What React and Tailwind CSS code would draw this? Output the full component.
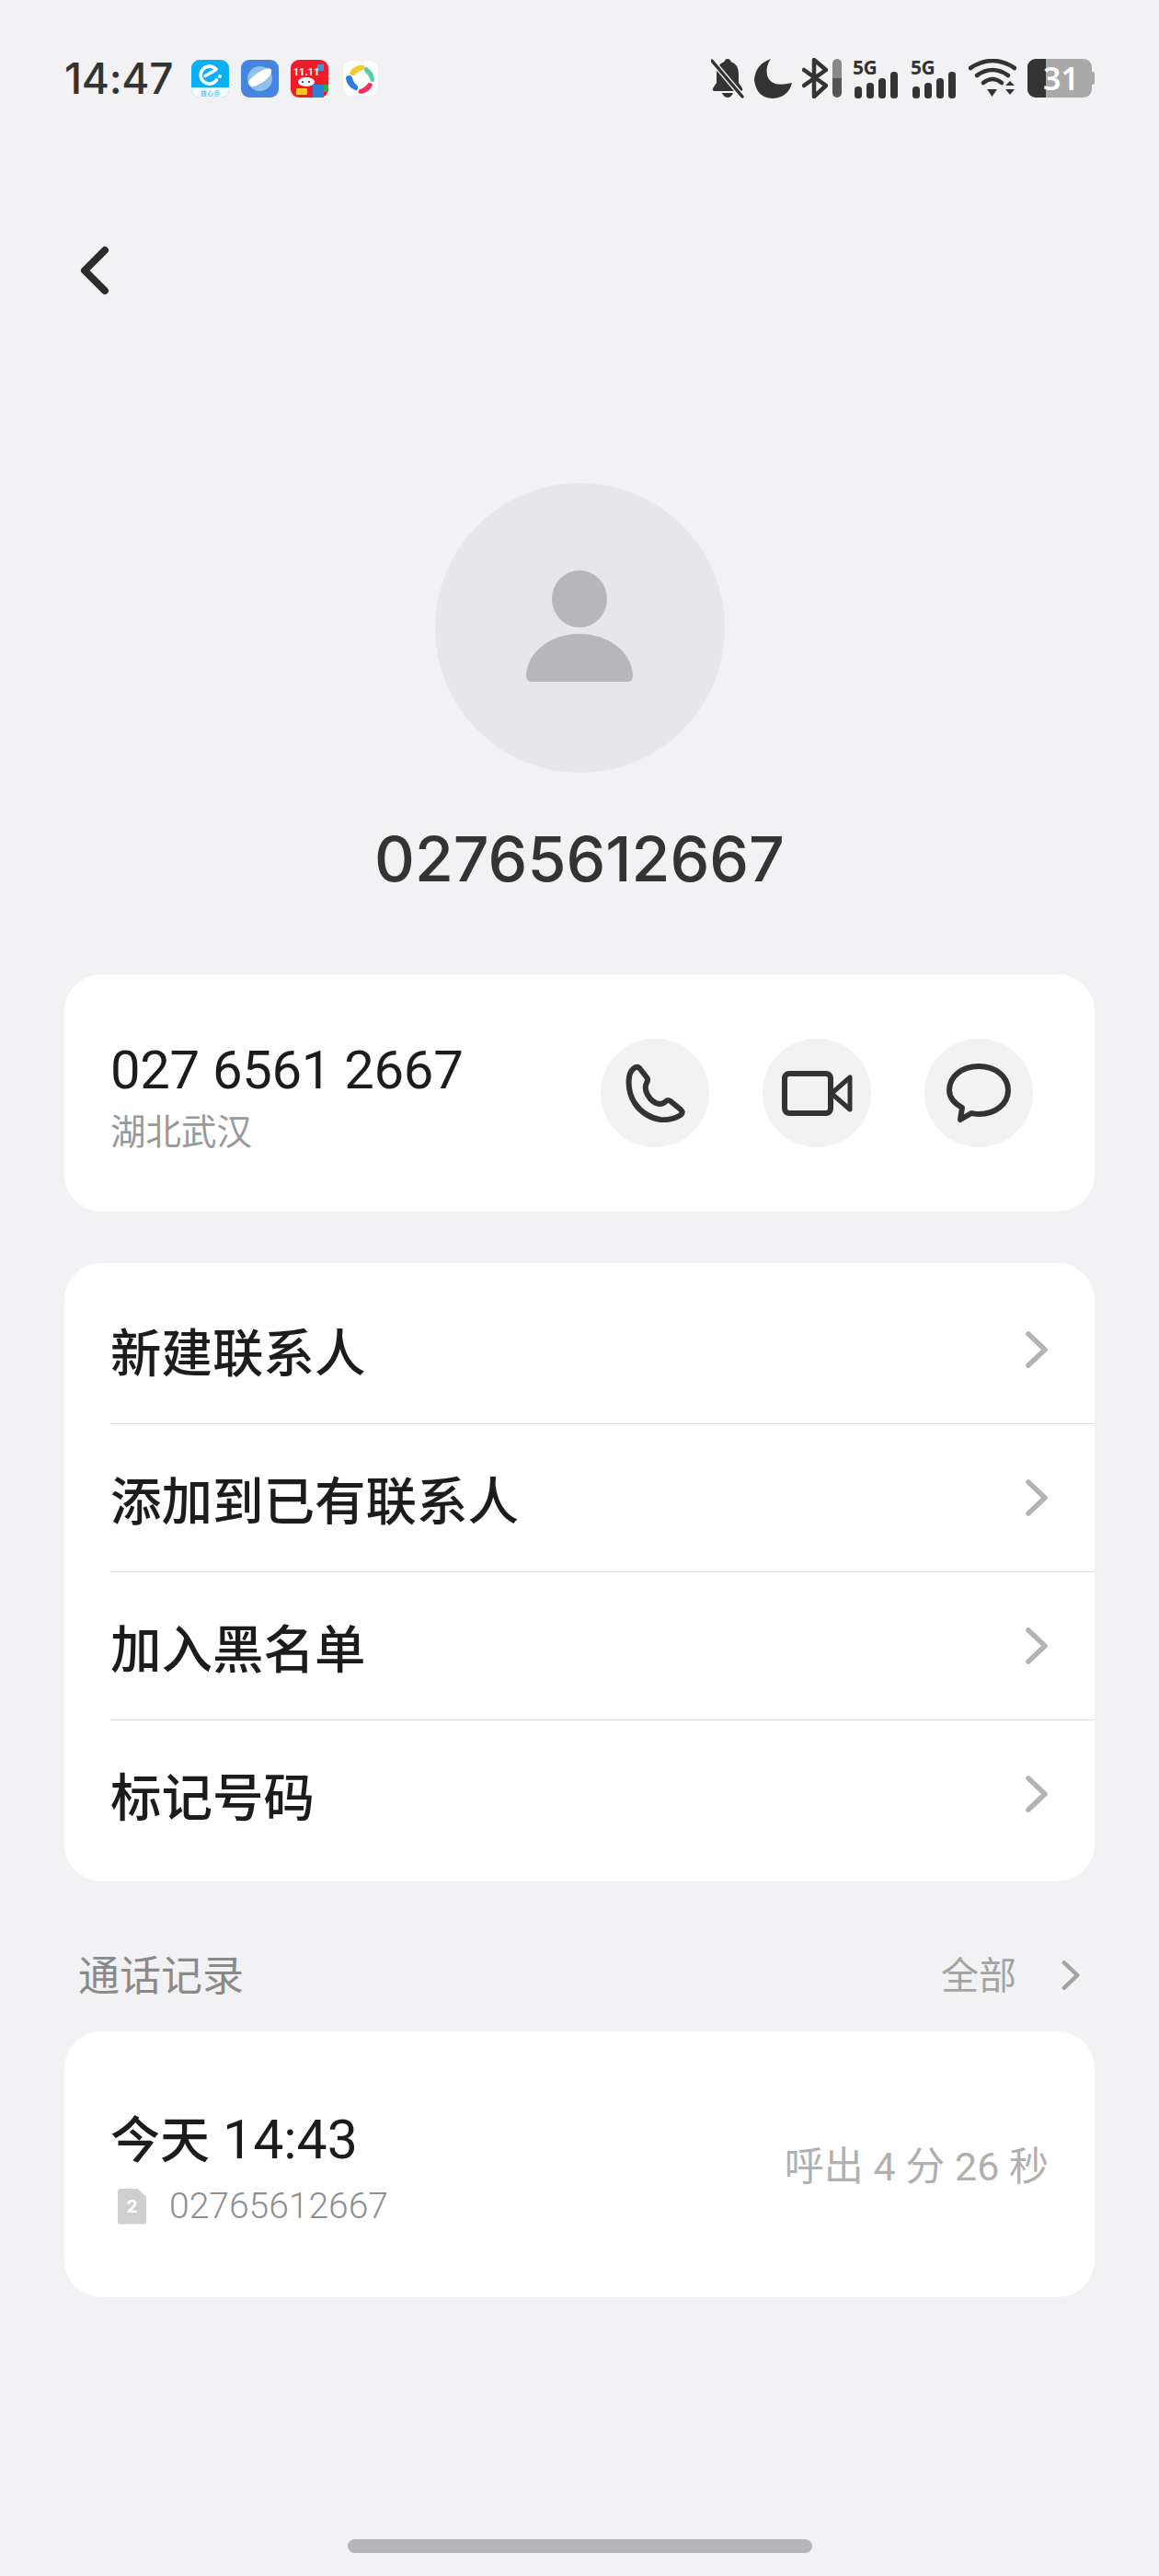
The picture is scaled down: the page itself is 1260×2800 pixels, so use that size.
const SANS = 'font-["Inter","Noto_Sans_CJK_SC",sans-serif]';
const ROBOTO = 'font-["Roboto","Noto_Sans_CJK_SC",sans-serif]';

function Chevron({ className }) {
  return (
    <svg viewBox="0 0 26 42" fill="none" className={className}>
      <path d="M4 4 L22 21 L4 38" stroke="currentColor" strokeWidth="5.5" strokeLinecap="round" strokeLinejoin="round" />
    </svg>
  );
}

function AppIcons() {
  return (
    <div className="ml-[20px] flex items-center gap-[13px]">
      <svg viewBox="0 0 41 41" className="h-[41px] w-[41px]">
        <rect width="41" height="41" rx="9" fill="#0ab0f5" />
        <path d="M0 30 H41 V32 A9 9 0 0 1 32 41 H9 A9 9 0 0 1 0 32 Z" fill="#f5fbfe" />
        <path d="M27 10.5 A9.5 9.5 0 1 0 27.5 22" fill="none" stroke="#fff" strokeWidth="3.6" strokeLinecap="round" />
        <path d="M15 17.5 L25 12" stroke="#fff" strokeWidth="3.6" strokeLinecap="round" />
        <circle cx="31" cy="18" r="2" fill="#fff" />
        <text x="20.5" y="38.5" textAnchor="middle" fontSize="7" fill="#0ab0f5" fontFamily="Noto Sans CJK SC">放心点</text>
      </svg>
      <svg viewBox="0 0 41 41" className="h-[41px] w-[41px]">
        <rect width="41" height="41" rx="9" fill="#4585e0" />
        <circle cx="20.5" cy="20.5" r="13.5" fill="#8fc0ee" />
        <path d="M9 27 Q6 25 11 20 Q17 14 25 10.5 Q32 8 33 11 Q34 15 28 21 Q21 27 14 29 Q10 29 9 27 Z" fill="#fff" />
      </svg>
      <svg viewBox="0 0 41 41" className="h-[41px] w-[41px]">
        <rect width="41" height="41" rx="9" fill="#f01c28" />
        <rect x="29" y="5" width="7" height="7" rx="1" fill="#4a90d9" />
        <text x="17" y="17" textAnchor="middle" fontSize="11" fontWeight="700" fill="#fff" fontFamily="Roboto">11.11</text>
        <ellipse cx="17" cy="24" rx="9" ry="5" fill="#fff" />
        <circle cx="13" cy="24" r="1" fill="#222" />
        <circle cx="20" cy="24" r="1" fill="#222" />
        <rect x="24" y="27" width="12" height="14" fill="#2f7fd6" />
        <rect x="6" y="31" width="12" height="7" rx="1" fill="#f7c624" />
        <rect x="36" y="27" width="5" height="8" fill="#35a853" />
      </svg>
      <svg viewBox="0 0 41 41" className="ml-[2px] h-[40px] w-[40px]">
        <rect x="0.5" y="0.5" width="40" height="40" rx="9" fill="#fff" stroke="#eeeeee" />
        <path d="M8 15 Q12 6 23 6 Q27 7 24 11 Q18 12 14 17 Q10 19 8 15 Z" fill="#f7c92d" />
        <path d="M27 8 Q35 13 36 22 Q35 26 32 24 Q30 17 25 13 Q24 8 27 8 Z" fill="#52cfa8" />
        <path d="M4 20 Q7 15 11 19 Q12 25 17 29 Q19 34 15 34 Q5 30 4 20 Z" fill="#2d7de0" />
        <path d="M19 33 Q25 32 29 26 Q33 25 34 28 Q30 37 21 38 Q16 37 19 33 Z" fill="#ee3462" />
      </svg>
    </div>
  );
}

function Signal({ className }) {
  return (
    <svg viewBox="0 0 50 43" className={`h-[43px] w-[50px] overflow-visible ${className}`}>
      <text x="0" y="17" fontSize="21" fontWeight="700" fill="#333" fontFamily="Noto Sans" letterSpacing="-0.5">5G</text>
      <rect x="2" y="30" width="8" height="13" rx="3.5" fill="#333" />
      <rect x="15" y="26" width="8" height="17" rx="3.5" fill="#333" />
      <rect x="28" y="21" width="8" height="22" rx="3.5" fill="#333" />
      <rect x="41" y="14" width="8" height="29" rx="3.5" fill="#333" />
    </svg>
  );
}

function StatusIcons() {
  return (
    <div className="flex items-center">
      <svg viewBox="0 0 36 44" className="h-[44px] w-[36px]">
        <path d="M18 1 Q21 1 21.5 4 Q30 7 30 17 V27 L34 33 Q35 36 32 36 H4 Q1 36 2 33 L6 27 V17 Q6 7 14.5 4 Q15 1 18 1 Z" fill="#333" />
        <path d="M12 38 H24 Q22 43 18 43 Q14 43 12 38 Z" fill="#333" />
        <path d="M1 3 L34 42" stroke="#f2f2f4" strokeWidth="6" />
        <path d="M1 3 L34 42" stroke="#333" strokeWidth="3.4" strokeLinecap="round" />
      </svg>
      <svg viewBox="0 0 42 43" className="ml-[11px] h-[43px] w-[42px]">
        <path d="M18 0 Q12 8 14 18 Q18 32 41 26 Q37 42 20 43 Q2 42 0 23 Q1 6 18 0 Z" fill="#333" />
      </svg>
      <svg viewBox="0 0 28 44" className="ml-[10px] h-[44px] w-[28px]">
        <path d="M2 13 L26 30 L13 42 V2 L26 13 L2 30" fill="none" stroke="#333" strokeWidth="4.5" strokeLinejoin="round" strokeLinecap="round" />
      </svg>
      <div className="ml-[5px] flex h-[42px] w-[10px] flex-col overflow-hidden rounded-[5px]">
        <div className="h-[21px] bg-[#888]" />
        <div className="h-[21px] bg-[#555]" />
      </div>
      <Signal className="ml-[12px]" />
      <Signal className="ml-[13px]" />
      <svg viewBox="0 0 52 42" className="ml-[13px] h-[42px] w-[52px]">
        <path d="M2 10 Q26 -6 50 10" fill="none" stroke="#333" strokeWidth="4.6" strokeLinecap="round" />
        <path d="M9 18 Q26 6 43 18" fill="none" stroke="#333" strokeWidth="4.6" strokeLinecap="round" />
        <path d="M16 26 Q26 18 36 26" fill="none" stroke="#333" strokeWidth="4.6" strokeLinecap="round" />
        <path d="M20 33 H31 L25.5 41 Z" fill="#333" />
        <path d="M40 29 L45 24 L50 29 Z M40 33 H50 L45 39 Z" fill="#333" />
      </svg>
      <div className="relative ml-[12px] flex h-[42px] w-[73px] items-center">
        <div className="flex h-[42px] w-[70px] overflow-hidden rounded-[9px] bg-[#a9a9aa]">
          <div className="h-full w-[20px] bg-[#333]" />
        </div>
        <div className="h-[14px] w-[3px] rounded-r-[2px] bg-[#a9a9aa]" />
        <span className="absolute top-0 left-[17px] text-[34px] leading-[42px] font-semibold text-white font-['Noto_Sans',sans-serif]">31</span>
      </div>
    </div>
  );
}

function PhoneIcon() {
  return (
    <svg viewBox="0 0 65 64" fill="none" className="h-[64px] w-[65px]">
      <path d="M11 4 Q14 3 16 6 L23 15 Q25 18 23 21 Q20 27 24 34 Q29 43 37 44 Q41 44 44 41 Q46 39 49 41 L60 50 Q63 53 60 56 Q50 62 38 61 Q20 58 10 43 Q2 30 4 15 Q5 7 11 4 Z" stroke="#333" strokeWidth="6" strokeLinejoin="round" />
    </svg>
  );
}

function VideoIcon() {
  return (
    <svg viewBox="0 0 77 49" fill="none" className="h-[49px] w-[77px]">
      <rect x="3" y="3" width="50" height="43" rx="5" stroke="#333" strokeWidth="6" />
      <path d="M54 24.500 L74 7 V42 Z" stroke="#333" strokeWidth="5" strokeLinejoin="round" />
    </svg>
  );
}

function ChatIcon() {
  return (
    <svg viewBox="0 0 70 65" fill="none" className="h-[65px] w-[70px]">
      <path d="M35 3 C53 3 67 14 67 29 C67 44 53 55 35 55 C31 55 29 54 27 54 L15 61 L17 48 C8 43 3 37 3 29 C3 14 17 3 35 3 Z" stroke="#333" strokeWidth="6" strokeLinejoin="round" />
    </svg>
  );
}

function ActionButton({ children }) {
  return (
    <button className="flex h-[118px] w-[118px] items-center justify-center rounded-full bg-[#f2f2f2]">
      {children}
    </button>
  );
}

const MENU = ['新建联系人', '添加到已有联系人', '加入黑名单', '标记号码'];

export default function App() {
  return (
    <div className={`flex h-[2800px] w-[1260px] flex-col bg-[#f2f2f4] ${SANS}`}>
      <div className="flex h-[170px] items-center justify-between px-[70px]">
        <div className="flex items-center">
          <span className="text-[46px] leading-none font-medium tracking-[-0.3px] text-[#333]">14:47</span>
          <AppIcons />
        </div>
        <StatusIcons />
      </div>

      <div className="flex h-[248px] items-center pl-[86px]">
        <svg viewBox="0 0 33 54" fill="none" className="h-[54px] w-[33px]">
          <path d="M28 5 L6 27 L28 49" stroke="#2b2b2b" strokeWidth="8" strokeLinecap="round" strokeLinejoin="round" />
        </svg>
      </div>

      <div className="mt-[107px] flex h-[315px] w-[315px] items-center justify-center self-center rounded-full bg-[#e7e7e9]">
        <svg viewBox="0 0 118 121" className="mb-[4px] h-[121px] w-[118px]">
          <ellipse cx="59" cy="31" rx="30" ry="31" fill="#b7b7b9" />
          <path d="M1 113 C3 88 28 69 59 69 C90 69 115 88 117 113 Q117 121 112 121 H6 Q1 121 1 113 Z" fill="#b7b7b9" />
        </svg>
      </div>

      <div className="mt-[43px] h-[100px] text-center text-[68px] leading-[100px] font-medium text-[#333]">02765612667</div>

      <section className="mx-[70px] mt-[76px] flex h-[258px] items-center justify-between rounded-[40px] bg-white pr-[67px] pl-[50px]">
        <div className="pt-[6px]">
          <div className={`text-[58px] leading-[70px] tracking-[-0.3px] text-[#1c1c1c] ${ROBOTO}`}>027 6561 2667</div>
          <div className="mt-[7px] text-[38.500px] leading-[50px] text-[#999]">湖北武汉</div>
        </div>
        <div className="flex gap-[58px]">
          <ActionButton><PhoneIcon /></ActionButton>
          <ActionButton><VideoIcon /></ActionButton>
          <ActionButton><ChatIcon /></ActionButton>
        </div>
      </section>

      <section className="mx-[70px] mt-[56px] rounded-[40px] bg-white pt-[14px] pb-[15px]">
        {MENU.map((label, i) => (
          <div key={label} className="ml-[50px]">
            {i > 0 && <div className="h-px bg-[#dedede]" />}
            <div className="flex h-[160px] items-center justify-between pr-[50px]">
              <span className="mt-[8px] text-[55.500px] leading-none font-medium text-[#1c1c1c]">{label}</span>
              <Chevron className="h-[42px] w-[26px] text-[#b3b3b3]" />
            </div>
          </div>
        ))}
      </section>

      <div className="flex h-[163px] items-center justify-between pt-[41px] pr-[85px] pl-[85px]">
        <span className="text-[45px] leading-none text-[#8a8a8a]">通话记录</span>
        <div className="flex items-center gap-[48px]">
          <span className="text-[41px] leading-none text-[#a3a3a3]">全部</span>
          <Chevron className="h-[34px] w-[22px] text-[#a3a3a3]" />
        </div>
      </div>

      <section className="mx-[70px] flex h-[289px] items-center justify-between rounded-[40px] bg-white px-[50px]">
        <div className="pt-[10px]">
          <div className={`flex items-baseline gap-[14px] leading-[68px] text-[#1c1c1c] ${ROBOTO}`}>
            <span className="text-[54px] font-medium">今天</span>
            <span className="text-[59px]">14:43</span>
          </div>
          <div className="mt-[11px] flex items-center pl-[8px]">
            <div className="flex h-[39px] w-[31px] items-center justify-center rounded-[3px] bg-[#cfcfcf] [clip-path:polygon(0_0,68%_0,100%_24%,100%_100%,0_100%)]">
              <span className="text-[19px] leading-none font-bold text-white">2</span>
            </div>
            <span className={`ml-[25px] text-[39px] leading-[50px] font-light text-[#8e8e8e] ${ROBOTO}`}>02765612667</span>
          </div>
        </div>
        <span className={`mt-[5px] text-[43px] leading-none text-[#b0b0b0] ${ROBOTO}`}>呼出 4 分 26 秒</span>
      </section>

      <div className="mx-auto mt-[263px] h-[15px] w-[505px] rounded-full bg-[#b6b6b8]" />
    </div>
  );
}
